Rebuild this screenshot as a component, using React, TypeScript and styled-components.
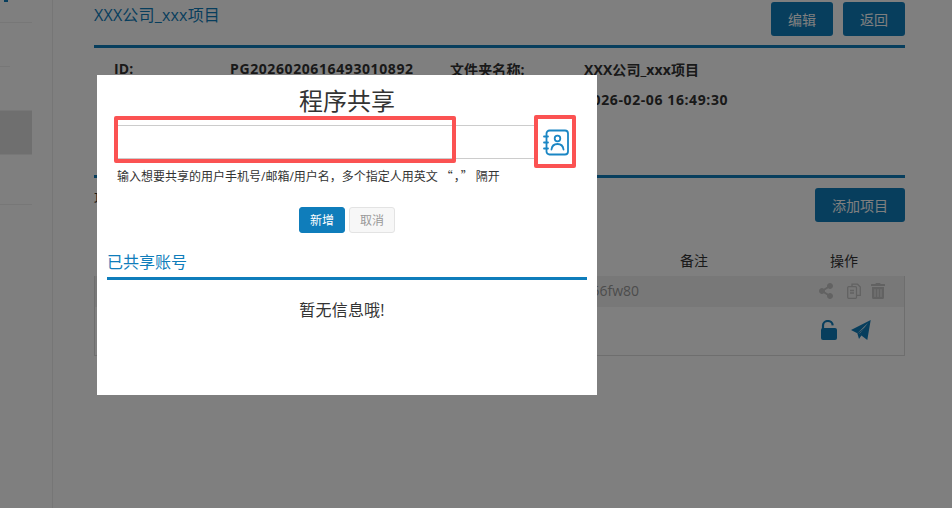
import { FaShareAlt, FaTrashAlt } from "react-icons/fa";
import styled, { createGlobalStyle } from "styled-components";

const GlobalStyle = createGlobalStyle`
    html, body {
        margin: 0;
        padding: 0;
        height: 100%;
        overflow: hidden;
    }
    body {
        font-family: 'Open Sans', 'Noto Sans CJK SC', sans-serif;
        color: #333;
        background: #fff;
    }
    * {
        box-sizing: border-box;
    }
`;

const Page = styled.div`
    position: relative;
    display: flex;
    width: 952px;
    height: 508px;
    overflow: hidden;
`;

const Sidebar = styled.aside`
    width: 32px;
    flex: none;
    background: #fff;
    box-shadow: 1px 0 3px rgba(0, 0, 0, 0.14);
`;

const SideItem = styled.div<{ $h: number; $active?: boolean; $short?: boolean }>`
    position: relative;
    height: ${(p) => p.$h}px;
    background: ${(p) => (p.$active ? "#dedede" : "transparent")};
    border-bottom: 1px solid ${(p) => (p.$short ? "transparent" : "#efefef")};
    &::after {
        content: '';
        display: ${(p) => (p.$short ? "block" : "none")};
        position: absolute;
        left: 0;
        bottom: -1px;
        width: 10px;
        height: 1px;
        background: #efefef;
    }
`;

const SideDot = styled.span`
    display: block;
    width: 4px;
    height: 2px;
    margin-left: 4px;
    background: #0f7dbb;
`;

const Gutter = styled.div`
    width: 21px;
    flex: none;
    border-right: 1px solid #ececec;
    background: #fff;
`;

const Content = styled.main`
    flex: 1;
    padding: 2px 47px 0 41px;
`;

const HeadRow = styled.div`
    display: flex;
    align-items: flex-start;
    justify-content: space-between;
    height: 43px;
`;

const ProjectTitle = styled.div`
    font-size: 16px;
    line-height: 26px;
    letter-spacing: 0.2px;
    color: #0f7dbb;
`;

const HeadButtons = styled.div`
    display: flex;
    gap: 10px;
`;

const MainButton = styled.button<{ $w: number }>`
    width: ${(p) => p.$w}px;
    height: 34px;
    border: 0;
    border-radius: 3px;
    padding: 0;
    font: inherit;
    font-size: 14px;
    color: #fff;
    background: #0f7dbb;
`;

const Rule = styled.div`
    height: 3px;
    background: #0f7dbb;
`;

const InfoGrid = styled.div`
    display: grid;
    grid-template-columns: 116px 220px 134px 1fr;
    grid-auto-rows: 31px;
    height: 127px;
    padding: 5px 0 0 20px;
    align-items: center;
`;

const InfoCell = styled.div<{ $wide?: boolean }>`
    font-size: 14px;
    font-weight: 700;
    letter-spacing: ${(p) => (p.$wide ? "0.6px" : "0.1px")};
    color: #333;
    white-space: nowrap;
`;

const ToolRow = styled.div`
    display: flex;
    justify-content: space-between;
    padding-top: 10px;
    height: 69px;
`;

const ListTitle = styled.div`
    font-size: 14px;
    line-height: 22px;
    color: #333;
`;

const TableHead = styled.div`
    display: grid;
    grid-template-columns: 1fr 150px 75px;
    height: 29px;
    padding-bottom: 4px;
    font-size: 14px;
    align-items: center;
`;

const HeadCell = styled.div`
    text-align: left;
    color: #333;
`;

const Table = styled.div`
    border: 1px solid #ddd;
    border-top: 0;
`;

const TableRow = styled.div<{ $h: number; $striped?: boolean }>`
    display: flex;
    align-items: center;
    justify-content: flex-end;
    height: ${(p) => p.$h}px;
    background: ${(p) => (p.$striped ? "#f1f1f1" : "#fff")};
    font-size: 14px;
    color: #999;
`;

const RowCode = styled.span`
    margin: 0 179px 3px 0;
    font-size: 14px;
`;

const RowIcons = styled.div<{ $accent?: boolean; $cols: string; $pad: number }>`
    display: grid;
    grid-template-columns: ${(p) => p.$cols};
    align-items: center;
    width: 86px;
    padding: 0 0 2px ${(p) => p.$pad}px;
    font-size: 16px;
    color: ${(p) => (p.$accent ? "#0f7dbb" : "#c4c4c4")};
    svg {
        display: block;
    }
`;

const Overlay = styled.div`
    position: absolute;
    inset: 0;
    background: rgba(0, 0, 0, 0.5);
`;

const Modal = styled.section`
    position: absolute;
    left: 97px;
    top: 75px;
    width: 500px;
    height: 320px;
    background: #fff;
    padding-top: 8px;
`;

const ModalTitle = styled.h2`
    margin: 0;
    font-size: 24px;
    font-weight: 400;
    line-height: 36px;
    text-align: center;
    color: #333;
`;

const InputRow = styled.div`
    display: flex;
    align-items: center;
    padding-left: 19px;
    margin-top: 6px;
`;

const ShareInput = styled.input`
    width: 418px;
    height: 34px;
    border: solid #ccc;
    border-width: 1px 0;
    outline: 0;
    padding: 0;
`;

const BookButton = styled.div`
    display: flex;
    margin-left: 9px;
    color: #1a86c4;
`;

const Hint = styled.p`
    margin: 8px 0 0 20px;
    font-size: 12px;
    line-height: 18px;
    color: #333;
    white-space: nowrap;
`;

const Quote = styled.span`
    font-family: 'Noto Sans CJK SC', sans-serif;
    letter-spacing: 1px;
    margin: 0 2px 0 3px;
`;

const ModalActions = styled.div`
    display: flex;
    justify-content: center;
    gap: 4px;
    margin-top: 21px;
`;

const ModalButton = styled.button<{ $primary?: boolean }>`
    width: 46px;
    height: 26px;
    padding: 0;
    border-radius: 3px;
    border: 1px solid ${(p) => (p.$primary ? "#0f7dbb" : "#e3e3e3")};
    background: ${(p) => (p.$primary ? "#0f7dbb" : "#f7f7f7")};
    color: ${(p) => (p.$primary ? "#fff" : "#999")};
    font: inherit;
    font-size: 12px;
`;

const SectionTitle = styled.div`
    margin: 17px 10px 0;
    height: 30px;
    font-size: 16px;
    line-height: 24px;
    color: #0f7dbb;
    border-bottom: 3px solid #0f7dbb;
`;

const EmptyNote = styled.div`
    margin-top: 18px;
    padding-right: 10px;
    font-size: 16px;
    line-height: 24px;
    letter-spacing: 0.2px;
    text-align: center;
    color: #333;
`;

const Marker = styled.div<{ $x: number; $y: number; $w: number; $h: number }>`
    position: absolute;
    left: ${(p) => p.$x}px;
    top: ${(p) => p.$y}px;
    width: ${(p) => p.$w}px;
    height: ${(p) => p.$h}px;
    border: 4px solid #fb5252;
    border-radius: 2px;
    pointer-events: none;
`;

function AddressBookIcon() {
    return (
        <svg width="26" height="27" viewBox="0 0 26 27" fill="none" stroke="currentColor" strokeWidth="1.8" strokeLinecap="round">
            <rect x="3.5" y="1.5" width="21.5" height="24" rx="3" />
            <path d="M1 7.500h4M1 13.500h4M1 19.500h4" />
            <circle cx="14.500" cy="9.500" r="2.800" />
            <path d="M8.500 20.500c.4-3.500 3-5.500 6-5.500s5.600 2 6 5.500" />
        </svg>
    );
}

function CopyIcon() {
    return (
        <svg width="14" height="16" viewBox="0 0 14 16" fill="none" stroke="currentColor" strokeWidth="1.3">
            <path d="M5 3V1.200h5.500L13.300 4v8.300H9.500" />
            <rect x="0.700" y="3.700" width="8.800" height="11.600" rx="1" />
            <path d="M3 7.500h4M3 10h4" />
        </svg>
    );
}

function OpenLockIcon() {
    return (
        <svg width="16" height="20" viewBox="0 0 16 20" fill="none">
            <rect x="0" y="8" width="16" height="12" rx="2" fill="currentColor" />
            <path d="M2 9V5.500C2 2.800 4.300 1 6.800 1s4.700 1.700 4.900 4.300" stroke="currentColor" strokeWidth="2.200" />
        </svg>
    );
}

function PlaneIcon() {
    return (
        <svg width="20" height="20" viewBox="0 0 20 20">
            <path d="M19.700 0L0 10l6.300 3.300L17 3 8.400 14l7.900 6z" fill="currentColor" />
            <path d="M6.300 13.300L8 19l2.700-4-2.300-1.500L14 7z" fill="currentColor" />
        </svg>
    );
}

function App() {
    return (
        <Page>
            <GlobalStyle />
            <Sidebar>
                <SideItem $h={23}>
                    <SideDot />
                </SideItem>
                <SideItem $h={44} $short />
                <SideItem $h={44} />
                <SideItem $h={44} $active />
                <SideItem $h={50} />
            </Sidebar>
            <Gutter />
            <Content>
                <HeadRow>
                    <ProjectTitle>XXX公司_xxx项目</ProjectTitle>
                    <HeadButtons>
                        <MainButton $w={62}>编辑</MainButton>
                        <MainButton $w={62}>返回</MainButton>
                    </HeadButtons>
                </HeadRow>
                <Rule />
                <InfoGrid>
                    <InfoCell>ID:</InfoCell>
                    <InfoCell $wide>PG2026020616493010892</InfoCell>
                    <InfoCell>文件夹名称:</InfoCell>
                    <InfoCell>XXX公司_xxx项目</InfoCell>
                    <InfoCell />
                    <InfoCell />
                    <InfoCell />
                    <InfoCell $wide>2026-02-06 16:49:30</InfoCell>
                </InfoGrid>
                <Rule />
                <ToolRow>
                    <ListTitle>项目列表</ListTitle>
                    <MainButton $w={90}>添加项目</MainButton>
                </ToolRow>
                <TableHead>
                    <span />
                    <HeadCell>备注</HeadCell>
                    <HeadCell>操作</HeadCell>
                </TableHead>
                <Table>
                    <TableRow $h={31} $striped>
                        <RowCode>56fw80</RowCode>
                        <RowIcons $cols="29px 23px 16px" $pad={0}>
                            <FaShareAlt />
                            <CopyIcon />
                            <FaTrashAlt />
                        </RowIcons>
                    </TableRow>
                    <TableRow $h={48}>
                        <RowIcons $accent $cols="30px 20px" $pad={3}>
                            <OpenLockIcon />
                            <PlaneIcon />
                        </RowIcons>
                    </TableRow>
                </Table>
            </Content>
            <Overlay />
            <Modal>
                <ModalTitle>程序共享</ModalTitle>
                <InputRow>
                    <ShareInput />
                    <BookButton>
                        <AddressBookIcon />
                    </BookButton>
                </InputRow>
                <Hint>
                    输入想要共享的用户手机号/邮箱/用户名，多个指定人用英文<Quote>“，”</Quote>隔开
                </Hint>
                <ModalActions>
                    <ModalButton $primary>新增</ModalButton>
                    <ModalButton>取消</ModalButton>
                </ModalActions>
                <SectionTitle>已共享账号</SectionTitle>
                <EmptyNote>暂无信息哦!</EmptyNote>
            </Modal>
            <Marker $x={114} $y={116} $w={342} $h={47} />
            <Marker $x={534} $y={115} $w={42} $h={53} />
        </Page>
    );
}

export default App;
